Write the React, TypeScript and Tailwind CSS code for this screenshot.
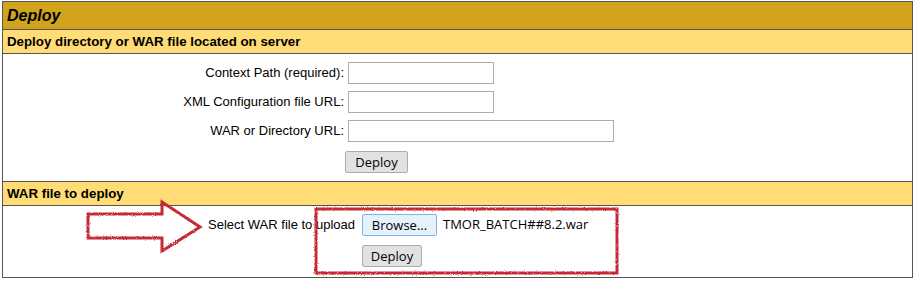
import React from "react";

const labelFont = { fontFamily: '"Liberation Sans", Arial, sans-serif' };
const uiFont = { fontFamily: '"Open Sans", "Noto Sans", sans-serif' };

const TextInput = ({ width }: { width: string }) => (
  <input
    type="text"
    className={`${width} h-[22px] border border-[#abadb3] bg-white outline-none`}
  />
);

const Button = ({ label, className }: { label: string; className: string }) => (
  <button
    type="button"
    style={uiFont}
    className={`h-[22px] rounded-[2px] border text-[13px] leading-none text-black ${className}`}
  >
    {label}
  </button>
);

const Annotations = () => (
  <svg
    className="pointer-events-none absolute left-0 top-0"
    width={916}
    height={282}
    viewBox="0 0 916 282"
  >
    <defs>
      <filter id="rough" x="-5%" y="-5%" width="110%" height="110%">
        <feTurbulence type="fractalNoise" baseFrequency="0.9" numOctaves="2" seed="3" />
        <feDisplacementMap in="SourceGraphic" scale="2.5" />
      </filter>
    </defs>
    <g filter="url(#rough)" fill="none" stroke="#c52a36" strokeWidth="3" strokeLinejoin="miter">
      <polygon points="88,214 162,214 162,202 200,227 162,251 162,238 88,238" />
      <rect x="316" y="209" width="301" height="64" />
    </g>
  </svg>
);

export default function App() {
  return (
    <div className="relative h-[282px] w-[916px] bg-white pl-[2px] pt-[1px]">
      <div className="w-[911px] border border-[#555]" style={labelFont}>
        <div className="flex h-[28px] items-center border-b border-[#555] bg-[#D2A41C] pl-[4px] text-[16px] font-bold italic text-black">
          Deploy
        </div>
        <div className="flex h-[24px] items-center border-b border-[#555] bg-[#FFDC75] pl-[4px] text-[13.3px] font-bold text-black">
          Deploy directory or WAR file located on server
        </div>

        <div className="flex flex-col pb-[8px] pt-[8px] text-[13px] text-black">
          <div className="flex h-[22px] items-center">
            <div className="w-[341px] text-right">Context Path (required):</div>
            <div className="ml-[4px] flex">
              <TextInput width="w-[146px]" />
            </div>
          </div>
          <div className="mt-[7px] flex h-[22px] items-center">
            <div className="w-[341px] text-right">XML Configuration file URL:</div>
            <div className="ml-[4px] flex">
              <TextInput width="w-[146px]" />
            </div>
          </div>
          <div className="mt-[7px] flex h-[22px] items-center">
            <div className="w-[341px] text-right">WAR or Directory URL:</div>
            <div className="ml-[4px] flex">
              <TextInput width="w-[266px]" />
            </div>
          </div>
          <div className="mt-[9px] flex">
            <Button
              label="Deploy"
              className="ml-[342px] w-[63px] border-[#adadad] bg-[#e1e1e1]"
            />
          </div>
        </div>

        <div className="flex h-[25px] items-center border-b border-t border-[#555] bg-[#FFDC75] pl-[4px] text-[13.3px] font-bold text-black">
          WAR file to deploy
        </div>

        <div className="flex flex-col pb-[10px] pt-[8px] text-[13px] text-black">
          <div className="flex h-[22px] items-center">
            <div className="w-[352px] text-right">Select WAR file to upload</div>
            <Button
              label="Browse..."
              className="ml-[7px] w-[75px] border-[#7eb4ea] bg-[#e5f1fb]"
            />
            <span style={uiFont} className="ml-[6px] text-[13px]">
              TMOR_BATCH##8.2.war
            </span>
          </div>
          <div className="mt-[9px] flex">
            <Button
              label="Deploy"
              className="ml-[359px] w-[60px] border-[#adadad] bg-[#e1e1e1]"
            />
          </div>
        </div>
      </div>
      <Annotations />
    </div>
  );
}
